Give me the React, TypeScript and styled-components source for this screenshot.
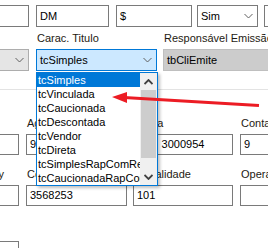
import styled, { createGlobalStyle } from 'styled-components'

/*---> Data <---*/
const titleTypes = [
  'tcSimples',
  'tcVinculada',
  'tcCaucionada',
  'tcDescontada',
  'tcVendor',
  'tcDireta',
  'tcSimplesRapComReg',
  'tcCaucionadaRapComReg',
]

/*---> Icons <---*/
const Chevron = ({ up = false, bold = false }: { up?: boolean; bold?: boolean }) => (
  <svg width='9' height='6' viewBox='0 0 9 6'>
    <polyline
      points={up ? '0.5,5 4.5,1 8.5,5' : '0.5,1 4.5,5 8.5,1'}
      fill='none'
      stroke={bold ? '#404040' : '#606060'}
      strokeWidth={bold ? 1.8 : 1}
    />
  </svg>
)

/*---> Components <---*/
const App = () => {
  return (
    <>
      <GlobalStyle />
      <Page>
        <Canvas>
          <Row>
            <Field $w={111}>
              <Label>Tipo</Label>
              <Input />
            </Field>
            <Field $w={73} $ml={7}>
              <Label>Tipo Espécie</Label>
              <Input>DM</Input>
            </Field>
            <Field $w={76} $ml={7}>
              <Label>Espécie</Label>
              <Input>$</Input>
            </Field>
            <Field $w={61} $ml={5}>
              <Label>Aceite</Label>
              <Select>
                <span>Sim</span>
                <Chevron />
              </Select>
            </Field>
            <Field $w={80} $ml={6}>
              <Label>Data</Label>
              <Input />
            </Field>
          </Row>

          <Row $mt={4}>
            <Field $w={111}>
              <Label>Tipo</Label>
              <Select $variant='plain'>
                <span />
                <Chevron />
              </Select>
            </Field>
            <Field $w={121} $ml={7}>
              <Label>Carac. Titulo</Label>
              <Select $variant='focus'>
                <span>tcSimples</span>
                <Chevron />
              </Select>
              <DropList>
                <Items>
                  {titleTypes.map((item, i) => (
                    <Item key={item} $active={i === 0}>
                      {item}
                    </Item>
                  ))}
                </Items>
                <ScrollBar>
                  <ScrollButton>
                    <Chevron up bold />
                  </ScrollButton>
                  <ScrollTrack>
                    <ScrollThumb />
                  </ScrollTrack>
                  <ScrollButton>
                    <Chevron bold />
                  </ScrollButton>
                </ScrollBar>
              </DropList>
            </Field>
            <Field $w={160} $ml={6}>
              <Label>Responsável Emissão</Label>
              <Select $variant='disabled'>
                <span>tbCliEmite</span>
              </Select>
            </Field>
          </Row>

          <Separator />

          <Row $mt={26}>
            <Field $w={101}>
              <Label>Banco</Label>
              <Input $h={21} />
            </Field>
            <Field $w={101} $ml={7}>
              <Label>Agência</Label>
              <Input $h={21}>9</Input>
            </Field>
            <Field $w={100} $ml={6}>
              <Label>Conta</Label>
              <Input $h={21} $align='center'>
                3000954
              </Input>
            </Field>
            <Field $w={101} $ml={7}>
              <Label>Conta Dígito</Label>
              <Input $h={21}>9</Input>
            </Field>
          </Row>

          <Row $mt={12}>
            <Field $w={101}>
              <Label>Cód. do Gateway</Label>
              <Input $h={21} />
            </Field>
            <Field $w={101} $ml={7}>
              <Label>Convênio</Label>
              <Input $h={21}>3568253</Input>
            </Field>
            <Field $w={100} $ml={6}>
              <Label>Modalidade</Label>
              <Input $h={21}>101</Input>
            </Field>
            <Field $w={101} $ml={7}>
              <Label>Operação</Label>
              <Input $h={21} />
            </Field>
          </Row>

          <Row $mt={17}>
            <Field $w={101}>
              <Label>Carteira</Label>
              <Input $h={21} />
            </Field>
          </Row>
        </Canvas>

        <Annotation width='268' height='248' viewBox='0 0 268 248'>
          <line x1='124' y1='97.5' x2='259' y2='105.5' stroke='#ec1c24' strokeWidth='3' />
          <polygon points='112,97 127,92 127,103' fill='#ec1c24' />
        </Annotation>
      </Page>
    </>
  )
}

/*---> Styles <---*/
const GlobalStyle = createGlobalStyle`
  body {
    margin: 0;
    background: #ffffff;
    font-family: 'Liberation Sans', Arial, sans-serif;
    font-size: 11px;
  }
`

const Page = styled.div`
  position: relative;
  width: 268px;
  height: 248px;
  overflow: hidden;
  background: #ffffff;
`

const Canvas = styled.div`
  width: 460px;
  margin-left: -82px;
  margin-top: -13px;
  display: flex;
  flex-direction: column;
`

const Row = styled.div<{ $mt?: number }>`
  display: flex;
  align-items: flex-start;
  margin-top: ${(p) => p.$mt || 0}px;
`

const Field = styled.div<{ $w: number; $ml?: number }>`
  position: relative;
  flex: none;
  width: ${(p) => p.$w}px;
  margin-left: ${(p) => p.$ml || 0}px;
  display: flex;
  flex-direction: column;
`

const Label = styled.div`
  height: 14px;
  line-height: 14px;
  margin-bottom: 4px;
  padding-left: 1px;
  color: #1e1a12;
  white-space: nowrap;
`

const Input = styled.div<{ $h?: number; $align?: 'left' | 'center' }>`
  box-sizing: border-box;
  height: ${(p) => p.$h || 22}px;
  border: 1px solid #7a7a7a;
  background: #ffffff;
  padding: 0 3px;
  line-height: ${(p) => (p.$h || 22) - 2}px;
  text-align: ${(p) => p.$align || 'left'};
  color: #000000;
`

const selectColors = {
  normal: { bg: '#ffffff', border: '#7a7a7a' },
  plain: { bg: '#e5e5e5', border: '#adadad' },
  focus: { bg: '#cce8ff', border: '#0078d7' },
  disabled: { bg: '#cccccc', border: '#bfbfbf' },
}

const Select = styled.div<{ $variant?: keyof typeof selectColors }>`
  box-sizing: border-box;
  height: 22px;
  display: flex;
  align-items: center;
  justify-content: space-between;
  padding: 0 4px 0 3px;
  background: ${(p) => selectColors[p.$variant || 'normal'].bg};
  border: 1px solid ${(p) => selectColors[p.$variant || 'normal'].border};
  color: #000000;

  svg {
    flex: none;
  }
`

const DropList = styled.div`
  position: absolute;
  top: 41px;
  left: 0;
  z-index: 2;
  box-sizing: border-box;
  width: 122px;
  height: 114px;
  display: flex;
  border: 1px solid #0078d7;
  background: #ffffff;
  box-shadow: 2px 2px 3px rgba(0, 0, 0, 0.25);
`

const Items = styled.div`
  flex: 1;
  min-width: 0;
  overflow: hidden;
`

const Item = styled.div<{ $active?: boolean }>`
  height: 14px;
  line-height: 14px;
  padding-left: 1px;
  white-space: nowrap;
  background: ${(p) => (p.$active ? '#0078d7' : 'transparent')};
  color: ${(p) => (p.$active ? '#ffffff' : '#000000')};
`

const ScrollBar = styled.div`
  flex: none;
  width: 17px;
  display: flex;
  flex-direction: column;
  background: #f0f0f0;
`

const ScrollButton = styled.div`
  height: 17px;
  display: flex;
  align-items: center;
  justify-content: center;
`

const ScrollTrack = styled.div`
  flex: 1;
  padding: 0 1px;
`

const ScrollThumb = styled.div`
  height: 68px;
  background: #cdcdcd;
`

const Separator = styled.div`
  margin-top: 18px;
  height: 1px;
  background: #e3e3e3;
`

const Annotation = styled.svg`
  position: absolute;
  top: 0;
  left: 0;
  z-index: 3;
  pointer-events: none;
`

export default App
